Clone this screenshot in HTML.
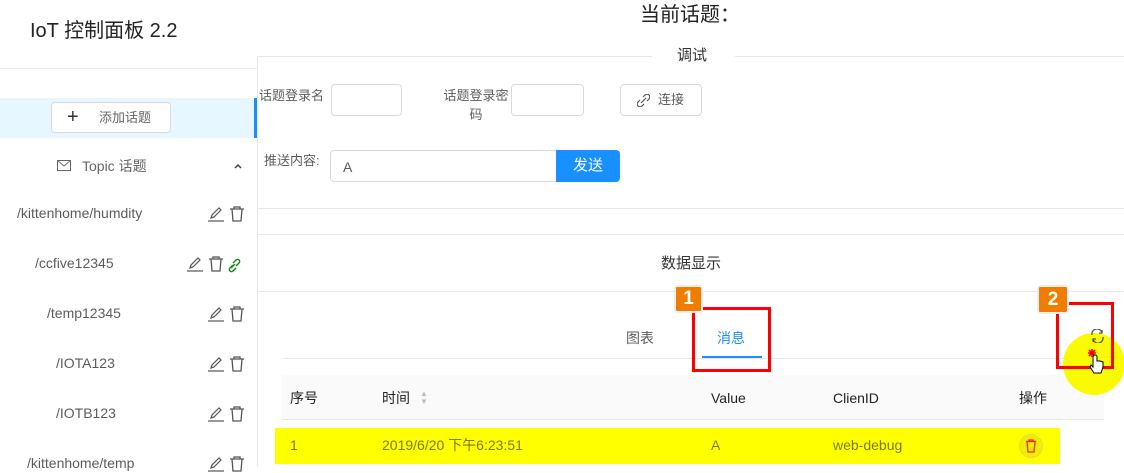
<!DOCTYPE html><html><head><meta charset="utf-8"><style>
*{margin:0;padding:0;box-sizing:border-box}
body{width:1124px;height:467px;overflow:hidden;background:#fff;position:relative;font-family:"Liberation Sans","Noto Sans CJK SC",sans-serif;font-size:14px;color:rgba(0,0,0,.65)}
.a{position:absolute;white-space:nowrap;line-height:20px}
.h{position:absolute;height:1px;background:#e8e8e8}
.v{position:absolute;width:1px;background:#e8e8e8}
.ic{position:absolute}
</style></head><body>
<div class="a" style="left:30px;top:20px;font-size:20px;line-height:22px;color:#222">IoT 控制面板 2.2</div>
<div class="h" style="left:0;top:68px;width:257px"></div>
<div class="v" style="left:257px;top:56px;height:411px"></div>
<div class="a" style="left:0;top:98px;width:254px;height:40px;background:#e6f7ff"></div>
<div class="a" style="left:254px;top:98px;width:3px;height:40px;background:#1890ff"></div>
<div class="a" style="left:51px;top:102px;width:120px;height:31px;background:#fff;border:1px solid #d9d9d9;border-radius:4px"></div>
<div class="a" style="left:67px;top:107px;font-size:20px;color:#333">+</div>
<div class="a" style="left:99px;top:108px;font-size:13px;color:#666">添加话题</div>
<svg class="ic" style="left:57px;top:160px" width="14" height="11"><rect x="0.5" y="0.5" width="13" height="10" fill="none" stroke="#666"/><path d="M0.5 0.5L7 6L13.5 0.5" fill="none" stroke="#666"/></svg>
<div class="a" style="left:82px;top:156px;font-size:14px;color:#666">Topic 话题</div>
<svg class="ic" style="left:234px;top:163px" width="8" height="6"><path d="M1 5L4 2L7 5" fill="none" stroke="#444" stroke-width="1.5"/></svg>
<div class="a" style="left:17px;top:203px">/kittenhome/humdity</div>
<div class="a" style="left:35px;top:253px">/ccfive12345</div>
<div class="a" style="left:47px;top:303px">/temp12345</div>
<div class="a" style="left:56px;top:353px">/IOTA123</div>
<div class="a" style="left:56px;top:403px">/IOTB123</div>
<div class="a" style="left:27px;top:453px">/kittenhome/temp</div>
<svg class="ic" width="0" height="0"><defs>
<g id="ed"><path d="M3 12L4 9L11 2L13 4L6 11Z" fill="none" stroke="#555" stroke-width="1.2"/><path d="M0 15H16" stroke="#555" stroke-width="1.2"/></g>
<g id="tr"><path d="M1 3H15M5 3V1H11V3M3 3L4 15H12L13 3" fill="none" stroke="#555" stroke-width="1.3"/></g>
</defs></svg>
<svg class="ic" style="left:208px;top:206px" width="40" height="17"><use href="#ed"/><g transform="translate(21,0)"><use href="#tr"/></g></svg>
<svg class="ic" style="left:187px;top:256px" width="60" height="17"><use href="#ed"/><g transform="translate(21,0)"><use href="#tr"/></g><path d="M44 12L48 8M46 7L49 4A2 2 0 0 1 52 7L49 10M46 9L43 12A2 2 0 0 0 46 15L49 12" fill="none" stroke="#1a8a1a" stroke-width="1.5"/></svg>
<svg class="ic" style="left:208px;top:306px" width="40" height="17"><use href="#ed"/><g transform="translate(21,0)"><use href="#tr"/></g></svg>
<svg class="ic" style="left:208px;top:356px" width="40" height="17"><use href="#ed"/><g transform="translate(21,0)"><use href="#tr"/></g></svg>
<svg class="ic" style="left:208px;top:406px" width="40" height="17"><use href="#ed"/><g transform="translate(21,0)"><use href="#tr"/></g></svg>
<svg class="ic" style="left:208px;top:456px" width="40" height="17"><use href="#ed"/><g transform="translate(21,0)"><use href="#tr"/></g></svg>

<div class="a" style="left:640px;top:4px;font-size:20px;line-height:22px;color:#222">当前话题：</div>
<div class="h" style="left:257px;top:56px;width:395px"></div>
<div class="h" style="left:735px;top:56px;width:389px"></div>
<div class="a" style="left:677px;top:46px;font-size:15px;color:#333">调试</div>
<div class="a" style="left:259px;top:86px;font-size:13px">话题登录名</div>
<div class="a" style="left:440px;top:86px;font-size:13px;line-height:19px;white-space:normal;width:72px;text-align:center">话题登录密码</div>
<div class="a" style="left:331px;top:84px;width:71px;height:32px;border:1px solid #d9d9d9;border-radius:4px"></div>
<div class="a" style="left:511px;top:84px;width:73px;height:32px;border:1px solid #d9d9d9;border-radius:4px;background:#fff"></div>
<div class="a" style="left:620px;top:84px;width:82px;height:32px;border:1px solid #d9d9d9;border-radius:4px"></div>
<svg class="ic" style="left:637px;top:94px" width="13" height="13"><path d="M4 9L9 4M6 3L8 1A2.5 2.5 0 0 1 12 5L10 7M7 10L5 12A2.5 2.5 0 0 1 1 8L3 6" fill="none" stroke="#555" stroke-width="1.2"/></svg>
<div class="a" style="left:658px;top:90px;font-size:13px">连接</div>
<div class="a" style="left:264px;top:151px;font-size:13px">推送内容:</div>
<div class="a" style="left:330px;top:150px;width:228px;height:32px;border:1px solid #d9d9d9;border-radius:4px 0 0 4px"></div>
<div class="a" style="left:343px;top:157px">A</div>
<div class="a" style="left:556px;top:150px;width:64px;height:32px;background:#1890ff;border-radius:0 4px 4px 0;color:#fff;font-size:15px;text-align:center;line-height:32px">发送</div>
<div class="h" style="left:257px;top:208px;width:867px"></div>
<div class="h" style="left:257px;top:234px;width:867px"></div>
<div class="a" style="left:661px;top:254px;font-size:15px;color:#333">数据显示</div>
<div class="h" style="left:257px;top:291px;width:867px"></div>
<div class="a" style="left:626px;top:328px">图表</div>
<div class="a" style="left:717px;top:328px;color:#1890ff">消息</div>
<div class="h" style="left:282px;top:358px;width:822px"></div>
<div class="a" style="left:702px;top:356px;width:60px;height:2px;background:#1890ff"></div>
<div class="a" style="left:282px;top:375px;width:822px;height:45px;background:#fafafa;border-bottom:1px solid #e8e8e8"></div>
<div class="a" style="left:290px;top:388px;color:#222">序号</div>
<div class="a" style="left:382px;top:388px;color:#222">时间</div>
<div class="a" style="left:420px;top:390px;font-size:8px;color:#bbb;line-height:8px">▲<br>▼</div>
<div class="a" style="left:711px;top:388px;color:#222">Value</div>
<div class="a" style="left:833px;top:388px;color:#222">ClienID</div>
<div class="a" style="left:1019px;top:388px;color:#222">操作</div>
<div class="a" style="left:275px;top:428px;width:785px;height:36px;background:#ffff00"></div>
<div class="a" style="left:290px;top:435px;color:#7a7a10">1</div>
<div class="a" style="left:382px;top:435px;color:#7a7a10">2019/6/20 下午6:23:51</div>
<div class="a" style="left:711px;top:435px;color:#7a7a10">A</div>
<div class="a" style="left:833px;top:435px;color:#7a7a10">web-debug</div>
<div class="a" style="left:1019px;top:434px;width:24px;height:24px;border-radius:50%;background:#f2ee00;border:1px solid #e0dc40"></div>
<svg class="ic" style="left:1025px;top:439px" width="12" height="14"><path d="M1 2.5H11M4 2.5V1H8V2.5M2 2.5L3 13H9L10 2.5" fill="none" stroke="#f5222d" stroke-width="1.3"/></svg>

<div class="a" style="left:692px;top:307px;width:79px;height:65px;border:3px solid #f00"></div>
<div class="a" style="left:674px;top:285px;width:29px;height:28px;background:#f07d00;border:2px solid #eee;border-radius:3px;color:#fff;font-weight:bold;font-size:19px;text-align:center;line-height:24px">1</div>
<div class="a" style="left:1063px;top:333px;width:62px;height:62px;border-radius:50%;background:#fafa00"></div>
<div class="a" style="left:1056px;top:302px;width:58px;height:67px;border:3px solid #f00"></div>
<div class="a" style="left:1037px;top:285px;width:32px;height:29px;background:#f07d00;border:2px solid #eee;border-radius:3px;color:#fff;font-weight:bold;font-size:19px;text-align:center;line-height:25px">2</div>
<svg class="ic" style="left:1090px;top:329px" width="15" height="14"><path d="M2 6A5 5 0 0 1 12 4M13 8A5 5 0 0 1 3 10" fill="none" stroke="#555" stroke-width="1.3"/><path d="M12 1V4H9M3 13V10H6" fill="none" stroke="#555" stroke-width="1.2"/></svg>
<svg class="ic" style="left:1086px;top:348px" width="22" height="30"><path d="M6 1V9M2 5H10M3 2L9 8M9 2L3 8" stroke="#f00" stroke-width="1.6"/><path d="M7 9V19L5 17L4 19L8 25H15L17 19V14L14 13L11 13V9A2 2 0 0 0 7 9Z" fill="#fff" stroke="#000" stroke-width="1"/></svg>
</body></html>
